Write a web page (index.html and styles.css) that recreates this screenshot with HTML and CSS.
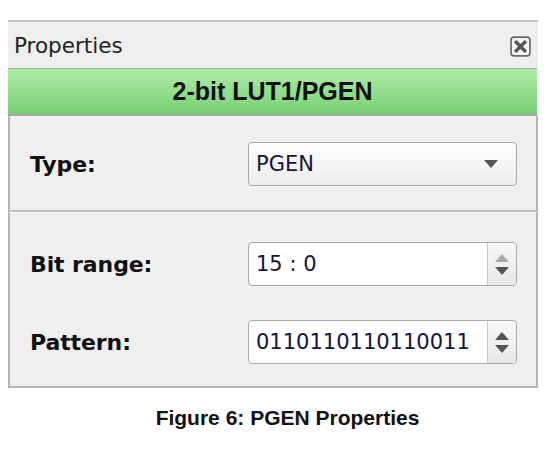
FILE: index.html
```html
<!DOCTYPE html>
<html>
<head>
<meta charset="utf-8">
<link rel="stylesheet" href="styles.css">
</head>
<body>
<div class="figure">
  <div class="panel">
    <div class="titlebar">
      <span class="title">Properties</span>
      <span class="close">
        <svg width="21" height="21" viewBox="0 0 20 20">
          <rect x="1" y="1" width="18" height="18" rx="3" fill="#f4f4f4" stroke="#6a6a6a" stroke-width="1.6"/>
          <path d="M6 6 L14 14 M14 6 L6 14" stroke="#555" stroke-width="3.2" stroke-linecap="square"/>
        </svg>
      </span>
    </div>
    <div class="header">2-bit LUT1/PGEN</div>
    <div class="section first">
      <div class="row">
        <span class="label">Type:</span>
        <div class="combo">
          <span class="value">PGEN</span>
          <svg class="arrow" width="14" height="8" viewBox="0 0 14 8"><path d="M0 0 H14 L7 8 Z" fill="#555"/></svg>
        </div>
      </div>
    </div>
    <div class="section second">
      <div class="row">
        <span class="label">Bit range:</span>
        <div class="spin">
          <span class="value">15 : 0</span>
          <span class="btns">
            <svg width="14" height="8" viewBox="0 0 14 8"><path d="M0 8 H14 L7 0 Z" fill="#a8a8a8"/></svg>
            <svg width="14" height="8" viewBox="0 0 14 8"><path d="M0 0 H14 L7 8 Z" fill="#555"/></svg>
          </span>
        </div>
      </div>
      <div class="row">
        <span class="label">Pattern:</span>
        <div class="spin">
          <span class="value">0110110110110011</span>
          <span class="btns">
            <svg width="14" height="8" viewBox="0 0 14 8"><path d="M0 8 H14 L7 0 Z" fill="#555"/></svg>
            <svg width="14" height="8" viewBox="0 0 14 8"><path d="M0 0 H14 L7 8 Z" fill="#555"/></svg>
          </span>
        </div>
      </div>
    </div>
  </div>
  <div class="caption">Figure 6: PGEN Properties</div>
</div>
</body>
</html>
```

FILE: styles.css
```css
html, body {
  margin: 0;
  padding: 0;
  background: #ffffff;
}
.figure {
  padding-top: 20px;
  width: 555px;
}
.panel {
  margin-left: 8px;
  width: 530px;
  box-sizing: border-box;
  background: #efefef;
  border-top: 2px solid #c4c4c4;
  font-family: "DejaVu Sans", sans-serif;
  color: #111;
}
.titlebar {
  height: 46px;
  display: flex;
  align-items: center;
  justify-content: space-between;
  padding: 0 7px 0 6px;
  box-sizing: border-box;
}
.title {
  font-size: 21.5px;
  color: #222;
}
.close {
  display: flex;
  margin-top: 2px;
}
.header {
  height: 48px;
  box-sizing: border-box;
  border-top: 1px solid #a8a8a8;
  border-bottom: 2px solid #a8a8a8;
  background: linear-gradient(#b0eca9, #78cf74);
  font-family: "Liberation Sans", Arial, sans-serif;
  font-weight: bold;
  font-size: 25px;
  display: flex;
  align-items: center;
  justify-content: center;
  color: #111;
  margin-right: 1px;
}
.section {
  border-left: 2px solid #b4b4b4;
  border-right: 2px solid #b4b4b4;
  box-sizing: border-box;
  padding: 0 19px 0 20px;
}
.section.first {
  height: 96px;
  display: flex;
  flex-direction: column;
  justify-content: center;
  border-bottom: 2px solid #c0c0c0;
  padding-top: 2px;
}
.section.second {
  height: 176px;
  border-top: 1px solid #fafafa;
  border-bottom: 2px solid #b4b4b4;
  padding-top: 29px;
  display: flex;
  flex-direction: column;
  gap: 34px;
}
.row {
  display: flex;
  align-items: center;
  justify-content: space-between;
}
.label {
  font-weight: bold;
  font-size: 22px;
  letter-spacing: -0.1px;
  color: #111;
}
.combo, .spin {
  width: 269px;
  height: 44px;
  box-sizing: border-box;
  border: 1px solid #a9a9a9;
  border-radius: 4px;
  display: flex;
  align-items: center;
}
.combo {
  background: linear-gradient(#fdfdfd, #ededed);
  justify-content: space-between;
  padding: 0 18px 0 7px;
}
.spin {
  background: #ffffff;
  padding-left: 7px;
}
.value {
  font-size: 21px;
  color: #14143a;
  flex: 1;
  white-space: nowrap;
}
.btns {
  width: 28px;
  height: 100%;
  border-left: 1px solid #c8c8c8;
  background: linear-gradient(#f8f8f8, #e8e8e8);
  border-radius: 0 4px 4px 0;
  display: flex;
  flex-direction: column;
  align-items: center;
  justify-content: center;
  gap: 5px;
}
.caption {
  margin-top: 18px;
  font-family: "Liberation Sans", Arial, sans-serif;
  font-weight: bold;
  font-size: 21px;
  color: #111;
  padding-left: 20px;
  text-align: center;
}
```
